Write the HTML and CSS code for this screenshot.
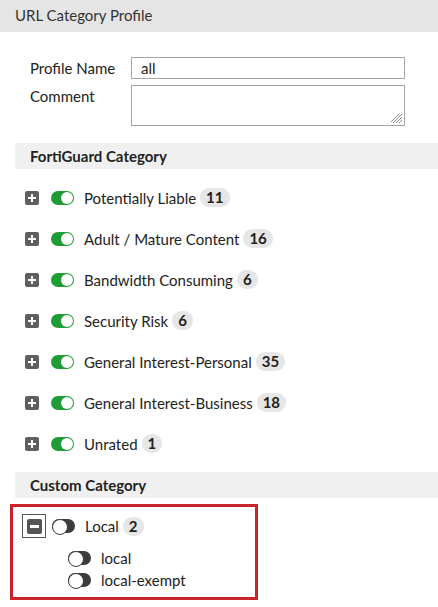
FILE: index.html
```html
<!DOCTYPE html>
<html>
<head>
<meta charset="utf-8">
<link rel="stylesheet" href="styles.css">
</head>
<body>
<div class="header">URL Category Profile</div>
<div class="form">
  <div class="field">
    <label class="lbl">Profile Name</label>
    <div class="input">all</div>
  </div>
  <div class="field">
    <label class="lbl">Comment</label>
    <div class="textarea">
      <svg class="grip" width="12" height="12" viewBox="0 0 12 12"><path d="M11 2L2 11M11 5L5 11M11 8L8 11M8 2L0 10" stroke="#888" stroke-width="1" fill="none"/></svg>
    </div>
  </div>
</div>
<div class="section first">FortiGuard Category</div>
<div class="list">
  <div class="row"><span class="plus"></span><span class="tog on"></span><span class="name">Potentially Liable</span><span class="badge">11</span></div>
  <div class="row"><span class="plus"></span><span class="tog on"></span><span class="name">Adult / Mature Content</span><span class="badge">16</span></div>
  <div class="row"><span class="plus"></span><span class="tog on"></span><span class="name">Bandwidth Consuming</span><span class="badge">6</span></div>
  <div class="row"><span class="plus"></span><span class="tog on"></span><span class="name">Security Risk</span><span class="badge">6</span></div>
  <div class="row"><span class="plus"></span><span class="tog on"></span><span class="name">General Interest-Personal</span><span class="badge">35</span></div>
  <div class="row"><span class="plus"></span><span class="tog on"></span><span class="name">General Interest-Business</span><span class="badge">18</span></div>
  <div class="row"><span class="plus"></span><span class="tog on"></span><span class="name">Unrated</span><span class="badge">1</span></div>
</div>
<div class="section">Custom Category</div>
<div class="custom">
  <div class="crow"><span class="minus-wrap"><span class="minus"></span></span><span class="tog off"></span><span class="name">Local</span><span class="badge">2</span></div>
  <div class="child"><span class="tog off"></span><span class="name">local</span></div>
  <div class="child"><span class="tog off"></span><span class="name">local-exempt</span></div>
</div>
</body>
</html>
```
FILE: styles.css
```css
* { box-sizing: border-box; }
body {
  margin: 0;
  background: #fff;
  font-family: Lato, "Open Sans", sans-serif;
  font-size: 15px;
  color: #222;
}
.header {
  height: 32px;
  background: #e5e5e5;
  padding-left: 15px;
  font-size: 15px;
  line-height: 30px;
  color: #333;
}
.form {
  padding: 25px 0 0 30px;
  display: flex;
  flex-direction: column;
  gap: 6px;
}
.field {
  display: flex;
  align-items: flex-start;
}
.lbl {
  width: 101px;
  font-size: 15px;
  line-height: 22px;
}
.input {
  width: 274px;
  height: 22px;
  border: 1px solid #a6a6a6;
  padding-left: 9px;
  line-height: 20px;
  font-size: 15px;
}
.textarea {
  width: 274px;
  height: 41px;
  border: 1px solid #a6a6a6;
  position: relative;
}
.grip {
  position: absolute;
  right: 1px;
  bottom: 1px;
}
.section {
  margin: 0 0 0 15px;
  height: 26px;
  background: #f0f0f0;
  padding-left: 15px;
  font-weight: bold;
  font-size: 15px;
  line-height: 26px;
  color: #222;
}
.section.first { margin-top: 17px; }
.list {
  padding: 8px 0 8px 25px;
}
.row {
  height: 41px;
  display: flex;
  align-items: center;
}
.plus {
  width: 14px;
  height: 14px;
  border-radius: 2px;
  background: #5f5f5f;
  position: relative;
  margin-right: 12px;
}
.plus::before, .plus::after {
  content: "";
  position: absolute;
  background: #fff;
}
.plus::before { left: 3px; top: 6px; width: 8px; height: 2px; }
.plus::after { left: 6px; top: 3px; width: 2px; height: 8px; }
.tog {
  width: 23px;
  height: 14px;
  border-radius: 7px;
  position: relative;
  flex: none;
}
.tog.on { background: #1f9d35; }
.tog.on::after {
  content: "";
  position: absolute;
  right: 1px;
  top: 1px;
  width: 12px;
  height: 12px;
  border-radius: 50%;
  background: #fff;
}
.tog.off { background: #3c3c3c; }
.tog.off::after {
  content: "";
  position: absolute;
  left: 0;
  top: 0;
  width: 14px;
  height: 14px;
  border-radius: 50%;
  background: #fff;
  border: 1.5px solid #3c3c3c;
}
.name {
  margin-left: 10px;
  color: #222;
}
.badge {
  margin-left: 4px;
  background: #e6e6e6;
  border-radius: 9px;
  padding: 0 6px;
  height: 19px;
  line-height: 19px;
  font-weight: bold;
  color: #222;
}
.custom {
  margin: 6px 0 0 10px;
  width: 248px;
  border: 3px solid #c9242c;
  padding: 7px 0 6px 9px;
}
.crow {
  display: flex;
  align-items: center;
  height: 24px;
}
.minus-wrap {
  width: 24px;
  height: 24px;
  border: 1px solid #555;
  display: flex;
  align-items: center;
  justify-content: center;
  margin-right: 6px;
}
.minus {
  width: 15px;
  height: 15px;
  background: #555;
  border-radius: 2px;
  position: relative;
}
.minus::after {
  content: "";
  position: absolute;
  left: 3px;
  top: 6px;
  width: 9px;
  height: 3px;
  background: #fff;
}
.child {
  display: flex;
  align-items: center;
  height: 22px;
  padding-left: 46px;
}
.crow + .child { margin-top: 9px; }
```
